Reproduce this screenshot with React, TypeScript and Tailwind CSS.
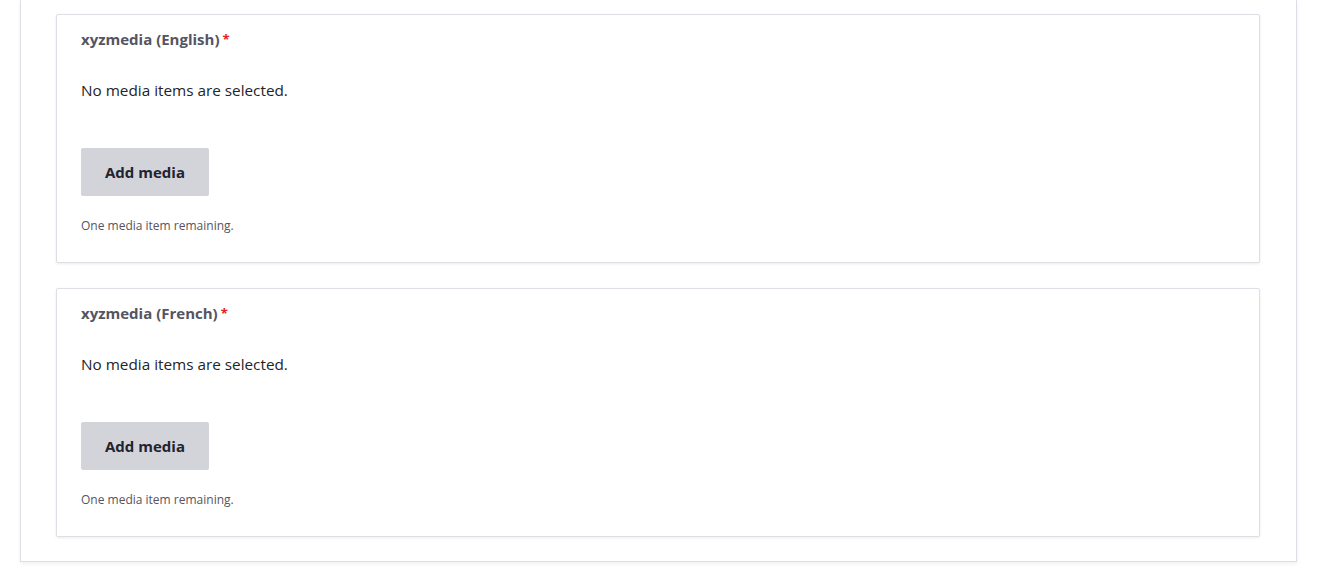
import React from 'react'

type MediaFieldProps = {
  label: string
}

function MediaField({ label }: MediaFieldProps) {
  return (
    <div className="border border-[#dedfe4] bg-white rounded-[2px] shadow-[0_1px_3px_rgba(0,0,0,0.08)] pl-6 pr-6 pt-[15px] pb-[27px]">
      <div className="flex items-center h-[18px] text-[15px] font-bold text-[#545560] leading-[18px]">
        {label}
        <span className="ml-[3px] text-[#dc2323] text-[13px]">*</span>
      </div>
      <p className="mt-[30px] text-[15.3px] leading-6 text-[#232429]">No media items are selected.</p>
      <button
        type="button"
        className="mt-[46px] block h-12 w-[128px] rounded-[2px] bg-[#d3d4d9] text-[15px] font-bold text-[#222330]"
      >
        Add media
      </button>
      <p className="mt-[21px] text-[12px] leading-[18px] text-[#545560]">One media item remaining.</p>
    </div>
  )
}

export default function App() {
  return (
    <div className="min-h-[583px] bg-white font-['Open_Sans',sans-serif]">
      <div className="ml-5 w-[1277px] border-x border-b border-[#dedfe4] bg-white shadow-[0_2px_4px_rgba(0,0,0,0.06)] pl-[35px] pr-9 pt-[14px] pb-6">
        <div className="flex flex-col gap-[25px]">
          <MediaField label="xyzmedia (English)" />
          <MediaField label="xyzmedia (French)" />
        </div>
      </div>
    </div>
  )
}
